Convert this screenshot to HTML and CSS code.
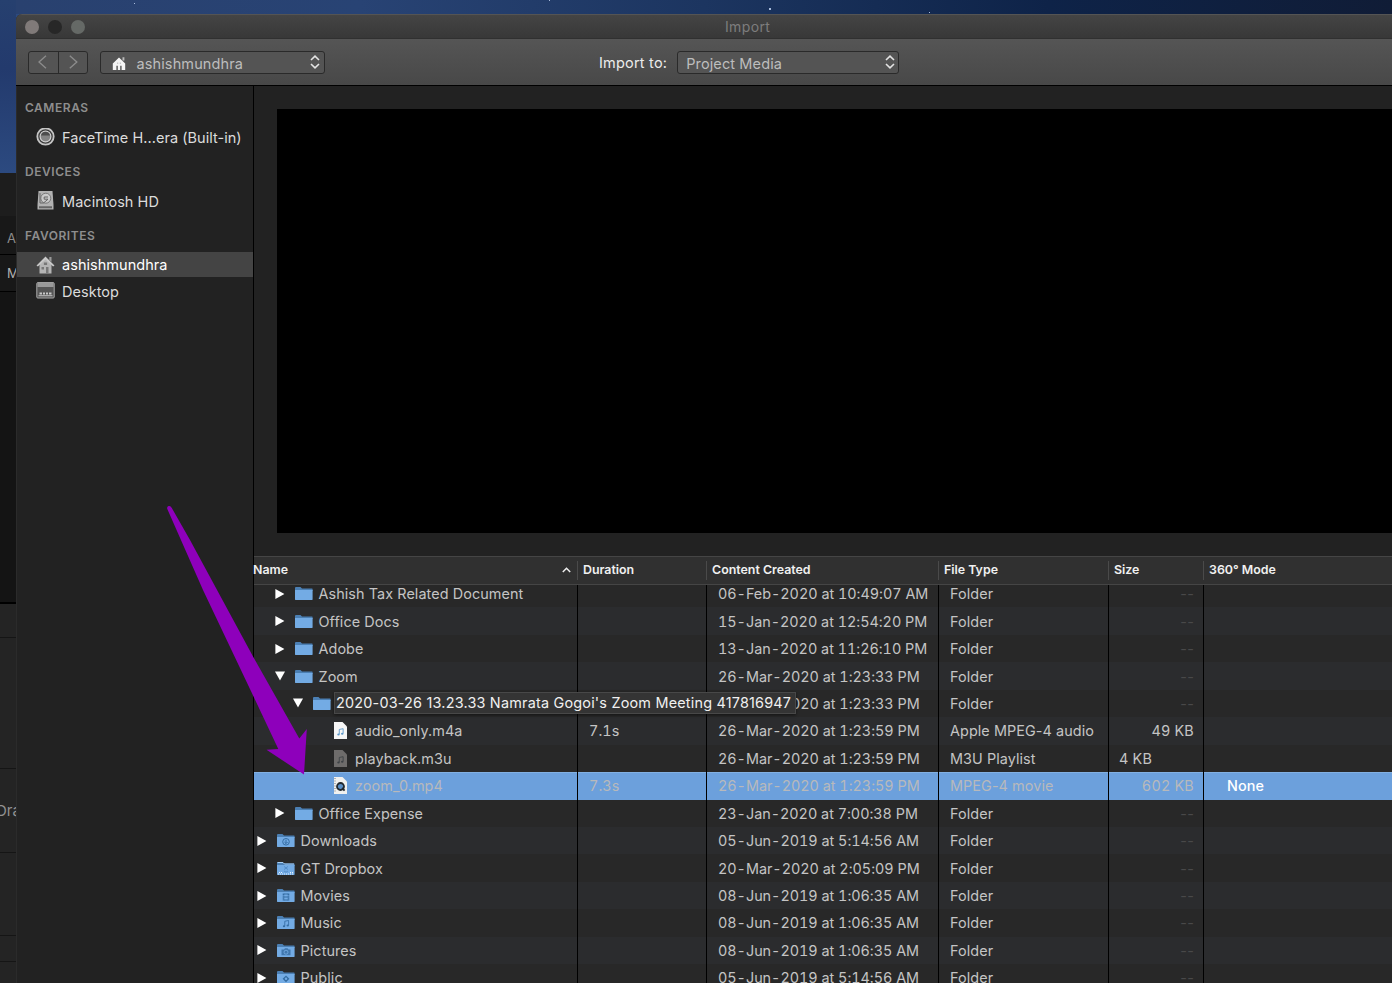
FILE: index.html
```html
<!DOCTYPE html>
<html lang="en">
<head>
<meta charset="utf-8">
<title>Import</title>
<link rel="stylesheet" href="styles.css">
</head>
<body>
<svg class="defs" aria-hidden="true">
  <symbol id="folder" viewBox="0 0 18 15"><path d="M0 2Q0 1 1 1H5.5L7 2.4H17Q17.6 2.4 17.6 3V5H0Z" fill="#4b7fb3"/><path d="M0 4H17.6V13.6Q17.6 14 17 14H.6Q0 14 0 13.6Z" fill="#73abe4"/></symbol>
  <symbol id="right" viewBox="0 0 10 10"><path d="M.4 0L9.4 5L.4 10Z" fill="#fff"/></symbol>
  <symbol id="down" viewBox="0 0 10 10"><path d="M0 .6H10L5 9.6Z" fill="#fff"/></symbol>
  <symbol id="updown" viewBox="0 0 10 14"><path d="M1 5L5 1.2L9 5M1 9L5 12.8L9 9" fill="none" stroke="#e4e4e4" stroke-width="1.6"/></symbol>
  <symbol id="page" viewBox="0 0 13 17"><path d="M0 0H8.5L13 4.5V17H0Z"/></symbol>
  <symbol id="note" viewBox="0 0 8 9"><path d="M2.6 7V1.6L7 .7V6" fill="none" stroke="currentColor"/><ellipse cx="1.7" cy="7.3" rx="1.4" ry="1.1" fill="currentColor"/><ellipse cx="6" cy="6.4" rx="1.4" ry="1.1" fill="currentColor"/></symbol>
  <symbol id="house" viewBox="0 0 18 18"><path d="M12.8 1H15V6L12.8 4Z" fill="#999"/><path d="M3 8L9 2.5L15 8V17.4H3Z" fill="#b4b4b4"/><path d="M0 9.6L9 .6L18 9.6L16.6 10.6L9 3.4L1.4 10.6Z" fill="#c9c9c9"/><path d="M7.4 6.5H10.6V9H7.4ZM9.5 11H12V17.4H9.5ZM5 11H7.5V13.5H5Z" fill="#777"/></symbol>
</svg>
<div class="desktop">
  <div class="behind">
    <div class="sky-edge"></div>
    <div class="b-tools"></div>
    <div class="b-label b-all">A</div>
    <div class="b-label b-m">M</div>
    <div class="b-browser"></div>
    <div class="b-row b-r1"></div>
    <div class="b-row b-r2"></div>
    <div class="b-row b-r3"><span>Dra</span></div>
    <div class="b-row b-r4"></div>
    <div class="b-row b-r5"></div>
  </div>
  <div class="main">
    <div class="sky"><i class="star s1"></i><i class="star s2"></i><i class="star s3"></i><i class="star s4"></i></div>
    <div class="window">
      <header class="titlebar">
        <div class="lights"><i class="close"></i><i class="min"></i><i class="max"></i></div>
        <div class="title">Import</div>
      </header>
      <div class="toolbar">
        <div class="nav">
          <span><svg width="10" height="14" viewBox="0 0 10 14"><path d="M8 .8L1 7L8 13.2" fill="none" stroke="#8b8b8b" stroke-width="1.4"/></svg></span>
          <span><svg width="10" height="14" viewBox="0 0 10 14"><path d="M1.8 .8L8.8 7L1.8 13.2" fill="none" stroke="#8b8b8b" stroke-width="1.4"/></svg></span>
        </div>
        <div class="select place">
          <svg class="place-icon" width="14" height="14" viewBox="0 0 14 14"><path d="M.8 7.5L7 1.6L13.2 7.5V14H9.6V9.8H8.2V14H5.8V9.8H4.4V14H.8Z" fill="#f4f4f4"/><path d="M10.5 1.2H12.4V4.5H10.5ZM5.2 6.4H6.2V8H5.2ZM7.8 6.4H8.8V8H7.8Z" fill="#bbb"/></svg>
          <span class="value">ashishmundhra</span>
          <svg class="ud" width="10" height="14"><use href="#updown"/></svg>
        </div>
        <label class="import-label">Import to:</label>
        <div class="select target">
          <span class="value">Project Media</span>
          <svg class="ud" width="10" height="14"><use href="#updown"/></svg>
        </div>
      </div>
      <div class="content">
        <nav class="sidebar">
          <h2>CAMERAS</h2>
          <div class="item"><svg width="19" height="19" viewBox="0 0 19 19"><circle cx="9.5" cy="8.5" r="8.2" fill="#3c3c3c" stroke="#c4c4c4" stroke-width="1.8"/><circle cx="9.5" cy="8.5" r="5.4" fill="#858585" stroke="#d0d0d0" stroke-width="1.2"/><path d="M5 7.5A4.6 4.6 0 0 1 14 7.5Z" fill="#4d4d4d"/></svg><span>FaceTime H...era (Built-in)</span></div>
          <h2>DEVICES</h2>
          <div class="item"><svg width="19" height="20" viewBox="0 0 19 20"><path d="M2.5 0H16.5L17.5 14V18.5H1.5V14Z" fill="#b2b2b2"/><path d="M3 15.2H16V17.2H3Z" fill="#666"/><circle cx="9.8" cy="7.2" r="5" fill="#c9c9c9" stroke="#777"/><path d="M4 2V12H7.5L12 8.2H8.2V6H12" fill="none" stroke="#666"/></svg><span>Macintosh HD</span></div>
          <h2>FAVORITES</h2>
          <div class="item current"><svg width="19" height="18"><use href="#house"/></svg><span>ashishmundhra</span></div>
          <div class="item"><svg width="19" height="19" viewBox="0 0 19 19"><rect x=".8" y=".6" width="17.4" height="15.4" rx="1" fill="#555" stroke="#aaa"/><path d="M1.4 1H17.6V5H1.4Z" fill="#999"/><path d="M3.5 12.5V10.5H6V12.5ZM7 12.5V10.5H9V12.5ZM10 12.5V10.5H12V12.5ZM13 12.5V10.5H15.5V12.5ZM2.5 13.2H16.5V14.2H2.5Z" fill="#c8c8c8"/></svg><span>Desktop</span></div>
        </nav>
        <section class="browser">
          <div class="viewer"></div>
          <div class="table">
            <div class="row head">
              <div class="c-name">Name<svg width="9" height="6" viewBox="0 0 9 6"><path d="M.8 5L4.5 1.3L8.2 5" fill="none" stroke="#eee" stroke-width="1.5"/></svg></div><div>Duration</div><div>Content Created</div><div>File Type</div><div>Size</div><div>360° Mode</div>
            </div>
            <div class="rows">
              <div class="row"><div class="name l1"><svg class="tri"><use href="#right"/></svg><svg class="fold"><use href="#folder"/></svg><span>Ashish Tax Related Document</span></div><div></div><div class="date">06-Feb-2020 at 10:49:07 AM</div><div>Folder</div><div class="size none">--</div><div></div></div>
              <div class="row"><div class="name l1"><svg class="tri"><use href="#right"/></svg><svg class="fold"><use href="#folder"/></svg><span>Office Docs</span></div><div></div><div class="date">15-Jan-2020 at 12:54:20 PM</div><div>Folder</div><div class="size none">--</div><div></div></div>
              <div class="row"><div class="name l1"><svg class="tri"><use href="#right"/></svg><svg class="fold"><use href="#folder"/></svg><span>Adobe</span></div><div></div><div class="date">13-Jan-2020 at 11:26:10 PM</div><div>Folder</div><div class="size none">--</div><div></div></div>
              <div class="row"><div class="name l1"><svg class="tri"><use href="#down"/></svg><svg class="fold"><use href="#folder"/></svg><span>Zoom</span></div><div></div><div class="date">26-Mar-2020 at 1:23:33 PM</div><div>Folder</div><div class="size none">--</div><div></div></div>
              <div class="row"><div class="name l2"><svg class="tri"><use href="#down"/></svg><svg class="fold"><use href="#folder"/></svg><div class="tip">2020-03-26 13.23.33 Namrata Gogoi's Zoom Meeting 417816947</div></div><div></div><div class="date">26-Mar-2020 at 1:23:33 PM</div><div>Folder</div><div class="size none">--</div><div></div></div>
              <div class="row"><div class="name l3"><svg class="file" viewBox="0 0 13 17"><use href="#page" fill="#f6f6f6"/><use href="#note" x="3" y="6" width="7" height="8" color="#5a96c8"/></svg><span>audio_only.m4a</span></div><div class="dur">7.1s</div><div class="date">26-Mar-2020 at 1:23:59 PM</div><div>Apple MPEG-4 audio</div><div class="size">49 KB</div><div></div></div>
              <div class="row"><div class="name l3"><svg class="file" viewBox="0 0 13 17"><use href="#page" fill="#6e6c6b"/><use href="#note" x="3" y="6" width="7" height="8" color="#3e4246"/></svg><span>playback.m3u</span></div><div></div><div class="date">26-Mar-2020 at 1:23:59 PM</div><div>M3U Playlist</div><div class="size left">4 KB</div><div></div></div>
              <div class="row selected"><div class="name l3"><svg class="file" viewBox="0 0 13 17"><use href="#page" fill="#f1f1ef"/><path d="M1 1V16" stroke="#777" stroke-dasharray="1 1.5"/><circle cx="6.5" cy="9.5" r="3.5" fill="#5a8ec4" stroke="#22282e" stroke-width="1.8"/><path d="M8 11L10.6 13.6" stroke="#22282e" stroke-width="1.8"/></svg><span>zoom_0.mp4</span></div><div class="dur">7.3s</div><div class="date">26-Mar-2020 at 1:23:59 PM</div><div>MPEG-4 movie</div><div class="size">602 KB</div><div class="mode">None</div></div>
              <div class="row"><div class="name l1"><svg class="tri"><use href="#right"/></svg><svg class="fold"><use href="#folder"/></svg><span>Office Expense</span></div><div></div><div class="date">23-Jan-2020 at 7:00:38 PM</div><div>Folder</div><div class="size none">--</div><div></div></div>
              <div class="row"><div class="name"><svg class="tri"><use href="#right"/></svg><svg class="fold" viewBox="0 0 18 15"><use href="#folder"/><circle cx="9" cy="8.8" r="3.3" fill="none" stroke="#356da3"/><path d="M9 6.8V10.4M7.4 9L9 10.6L10.6 9" fill="none" stroke="#356da3"/></svg><span>Downloads</span></div><div></div><div class="date">05-Jun-2019 at 5:14:56 AM</div><div>Folder</div><div class="size none">--</div><div></div></div>
              <div class="row"><div class="name"><svg class="tri"><use href="#right"/></svg><svg class="fold" viewBox="0 0 18 15"><use href="#folder"/><path d="M.5 1.5H6L7.5 3H17" fill="none" stroke="#a9d0f5"/><path d="M1 13H17M2 11.5H5M13 11.5H16" fill="none" stroke="#e3f1ff" stroke-dasharray="1 1"/><path d="M7 5.5L9 6.8L11 5.5M7 8.5L9 7.2L11 8.5M7 10L9 11.2L11 10" fill="none" stroke="#558fc9"/></svg><span>GT Dropbox</span></div><div></div><div class="date">20-Mar-2020 at 2:05:09 PM</div><div>Folder</div><div class="size none">--</div><div></div></div>
              <div class="row"><div class="name"><svg class="tri"><use href="#right"/></svg><svg class="fold" viewBox="0 0 18 15"><use href="#folder"/><path d="M6.5 5.5V12.5M11.5 5.5V12.5" stroke="#356da3" stroke-width="1.6" stroke-dasharray="1.4 .5"/><path d="M7 6H11M7 9H11M7 12H11" stroke="#356da3"/></svg><span>Movies</span></div><div></div><div class="date">08-Jun-2019 at 1:06:35 AM</div><div>Folder</div><div class="size none">--</div><div></div></div>
              <div class="row"><div class="name"><svg class="tri"><use href="#right"/></svg><svg class="fold" viewBox="0 0 18 15"><use href="#folder"/><use href="#note" x="5.5" y="4.6" width="7" height="8.4" color="#356da3"/></svg><span>Music</span></div><div></div><div class="date">08-Jun-2019 at 1:06:35 AM</div><div>Folder</div><div class="size none">--</div><div></div></div>
              <div class="row"><div class="name"><svg class="tri"><use href="#right"/></svg><svg class="fold" viewBox="0 0 18 15"><use href="#folder"/><path d="M4.5 6.5H7L8 5.2H10.5L11.5 6.5H13.5V12.2H4.5Z" fill="#4077ae"/><circle cx="9" cy="9.2" r="2" fill="none" stroke="#78aee4" stroke-width=".8"/></svg><span>Pictures</span></div><div></div><div class="date">08-Jun-2019 at 1:06:35 AM</div><div>Folder</div><div class="size none">--</div><div></div></div>
              <div class="row"><div class="name"><svg class="tri"><use href="#right"/></svg><svg class="fold" viewBox="0 0 18 15"><use href="#folder"/><path d="M9 5.4L12.4 8.8L9 12.2L5.6 8.8Z" fill="#356da3"/><circle cx="9" cy="8.8" r="1.2" fill="#73abe4"/></svg><span>Public</span></div><div></div><div class="date">05-Jun-2019 at 5:14:56 AM</div><div>Folder</div><div class="size none">--</div><div></div></div>
            </div>
          </div>
        </section>
      </div>
    </div>
  </div>
  <svg class="pointer" width="150" height="280" viewBox="160 500 150 280"><path d="M167.3 509Q166.6 506.6 168.6 506Q170.6 505.4 171.8 508L190 540L253.3 657L299.3 738.6L306.8 729L304 774.5L266.5 749.8L278.3 749L240 668L203 590Z" fill="#8e00bb"/></svg>
</div>
</body>
</html>
```
FILE: styles.css
```css
* { box-sizing: border-box; }
body { margin: 0; background: #222; font-family: Inter, "Liberation Sans", sans-serif; color: #c4c4c4; }
.defs { display: none; }
svg { display: block; flex: none; }
.desktop { position: relative; display: grid; grid-template-columns: 16px 1fr; width: 1392px; height: 983px; overflow: hidden; }

/* strip of the application behind the dialog */
.behind { display: flex; flex-direction: column; overflow: hidden; background: #242424; font-size: 14px; color: #8c8c8c; }
.behind > div { flex: none; }
.sky-edge { height: 173px; background: linear-gradient(#26406f, #233a6d 40%, #2c4a80); }
.b-tools { height: 43px; background: #1d1d1d; }
.b-label { padding-left: 7px; background: #181818; border-bottom: 1px solid #000; font-size: 13px; }
.b-all { height: 39px; line-height: 45px; }
.b-m { height: 37px; line-height: 37px; color: #b0b0b0; }
.b-browser { height: 312px; background: #141414; border-bottom: 2px solid #000; }
.b-row { border-bottom: 1px solid #151515; background: #242424; }
.b-r1 { height: 34px; }
.b-r2 { height: 131px; }
.b-r3 { height: 84px; padding: 33px 0 0; line-height: 18px; color: #929292; }
.b-r3 span { display: block; margin-left: -4px; font-size: 15px; }
.b-r4 { height: 83px; }
.b-r5 { height: 26px; }

.main { display: flex; flex-direction: column; min-width: 0; background: #2c4a80; }
.sky { position: relative; height: 14px; background: linear-gradient(90deg, #29416f, #284374 25%, #1c3560 50%, #0e2348 75%, #101c36); }
.star { position: absolute; width: 1px; height: 1px; background: #a9bcdc; }
.s1 { left: 118px; top: 3px; }
.s2 { left: 533px; top: 0; }
.s3 { left: 753px; top: 8px; width: 2px; height: 2px; }
.s4 { left: 913px; top: 12px; }
.window { flex: 1; display: flex; flex-direction: column; min-height: 0; border-radius: 6px 0 0 0; overflow: hidden; background: #222; }
.titlebar { display: flex; align-items: center; height: 25px; padding-left: 9px; border-top: 1px solid #545454; border-bottom: 1px solid #303030; background: linear-gradient(#444, #383838); }
.lights { display: flex; gap: 9px; width: 700px; }
.lights i { width: 14px; height: 14px; border-radius: 50%; background: #807a79; }
.lights .min { background: #272727; }
.lights .max { background: #656966; }
.title { font-size: 14px; letter-spacing: .35px; color: #7d7d7d; }
.toolbar { display: flex; align-items: center; height: 47px; padding-left: 12px; border-bottom: 1px solid #000; background: linear-gradient(#555, #484848); }
.nav, .select { display: flex; align-items: center; height: 23px; border: 1px solid #2a2a2a; border-radius: 3px; background: #545454; }
.nav { width: 60px; }
.nav span { flex: 1; display: grid; place-items: center; height: 100%; }
.nav span + span { border-left: 1px solid #2a2a2a; }
.place { width: 225px; margin-left: 12px; padding: 0 4px 0 11px; gap: 10.5px; }
.place-icon { margin-top: 2px; }
.target { width: 222px; margin-left: 10px; padding: 0 3.5px 0 8px; }
.value { padding-top: 2px; font-size: 14.5px; letter-spacing: .12px; color: #bdbdbd; }
.ud { margin-left: auto; }
.import-label { margin-left: 274px; font-size: 14.5px; letter-spacing: .2px; color: #ececec; }

.content { flex: 1; display: grid; grid-template-columns: 238px 1fr; min-height: 0; }
.sidebar { padding-top: 14px; border-left: 1px solid #2b2b2b; border-right: 1px solid #000; background: #222; }
.sidebar h2 { margin: 0; padding-left: 8px; height: 16px; line-height: 16px; font-size: 12px; font-weight: 600; letter-spacing: .55px; color: #8e8e8e; }
.item { display: flex; align-items: center; gap: 7px; height: 26px; margin-bottom: 14px; padding-left: 19px; font-size: 14.5px; color: #dcdcdc; }
.item span { letter-spacing: .04px; }
h2 + .item { margin-top: 8px; }
.sidebar .current { height: 25px; margin: 8px 0 1px; background: #444; color: #fff; }

.browser { display: flex; flex-direction: column; min-width: 0; min-height: 0; }
.viewer { height: 424px; margin: 23px 0 23px 23px; background: #000; }
.table { flex: 1; display: flex; flex-direction: column; min-height: 0; }
.row { display: grid; grid-template-columns: 324px 129px 232px 170px 95px 1fr; height: 27.45px; background: #282828; font-size: 14.4px; letter-spacing: .08px; }
.row > div { display: flex; align-items: center; padding-left: 11px; border-right: 1px solid #000; white-space: nowrap; min-width: 0; }
.row > div:last-child { border: 0; }
.rows { flex: 1; min-height: 0; overflow: hidden; }
.rows .row:first-child { margin-top: -5px; }
.rows .row:nth-child(even) { background: #2b2c2e; }
.head { height: 29px; padding: 4px 0; border-top: 1px solid #454545; border-bottom: 1px solid #454545; background: #303030; font-size: 12.4px; letter-spacing: 0; font-weight: 600; color: #f0f0f0; }
.head > div { padding: 0 0 2px 5px; border-color: #4a4a4a; }
.head > .c-name { justify-content: space-between; padding: 0 6px 2px 0; margin-left: -1px; }
.row > .name { padding-left: 3px; }
.row > .l1 { padding-left: 21px; }
.row > .l2 { padding-left: 39px; }
.row > .l3 { padding-left: 80px; }
.tri { width: 10px; height: 10px; margin-right: 10px; }
.fold { width: 18px; height: 15px; margin-right: 5.5px; }
.file { width: 13px; height: 17px; margin-right: 8px; }
.date, .dur, .size { font-variant-numeric: tabular-nums; }
.date { letter-spacing: -.02px; }
.row > .size { justify-content: flex-end; padding-right: 9px; letter-spacing: .2px; }
.row > .left { justify-content: flex-start; padding-left: 10px; }
.row > .none { color: #494949; font-variant-numeric: normal; }
.rows .row.selected { background: linear-gradient(#82b0e2 1px, #6ca0dc 1px); color: #b8b9bb; }
.row > .mode { padding-left: 23px; color: #fff; font-weight: 500; }
.tip { position: relative; z-index: 2; margin-left: -3px; height: 22px; padding: 0 4px 0 1.5px; border: 1px solid #484848; background: #343434; line-height: 20px; letter-spacing: .21px; color: #f0f0f0; box-shadow: 0 1px 3px #0008; }
.pointer { position: absolute; left: 160px; top: 500px; z-index: 5; }
```
